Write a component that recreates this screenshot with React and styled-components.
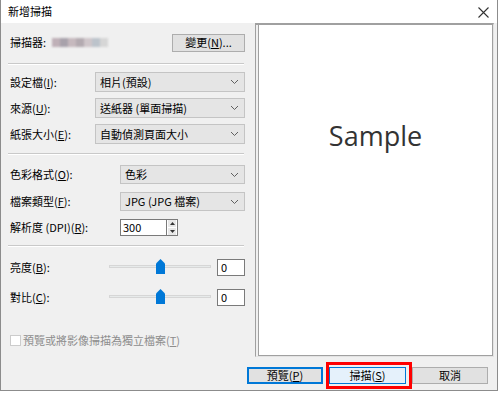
import React from 'react';
import styled, { createGlobalStyle } from 'styled-components';

const Global = createGlobalStyle`
  body {
    margin: 0;
    background: #fff;
    font-family: "Noto Sans CJK TC", "Noto Sans", sans-serif;
    font-size: 11px;
    color: #000;
  }
`;

function Mn({ children }) {
  return <u>{children}</u>;
}

function Chevron() {
  return (
    <svg width="9" height="6" viewBox="0 0 9 6">
      <path d="M1 1 L4.5 4.5 L8 1" fill="none" stroke="#606060" strokeWidth="1" />
    </svg>
  );
}

function Thumb() {
  return (
    <svg width="9" height="15" viewBox="0 0 9 15">
      <path d="M4.5 0 L9 4.5 V15 H0 V4.5 Z" fill="#0078d7" />
    </svg>
  );
}

function App() {
  return (
    <>
      <Global />
      <Window>
        <TitleBar>
          <span>新增掃描</span>
          <Close>
            <svg width="11" height="11" viewBox="0 0 11 11">
              <path d="M0.5 0.5 L10.5 10.5 M10.5 0.5 L0.5 10.5" stroke="#333" strokeWidth="1.1" />
            </svg>
          </Close>
        </TitleBar>
        <Body>
          <LeftPane>
            <ScannerRow>
              <span>掃描器:</span>
              <Blur>
                <i style={{ background: '#bfb0b7' }} />
                <i style={{ background: '#a8a2ab' }} />
                <i style={{ background: '#c6b9be' }} />
                <i style={{ background: '#b3aab0' }} />
                <i style={{ background: '#cfc6ca' }} />
                <i style={{ background: '#bcc3cb' }} />
                <i style={{ background: '#d6d6d6' }} />
              </Blur>
              <Button $w={73} $ml="auto">變更(<Mn>N</Mn>)...</Button>
            </ScannerRow>
            <Separator $mt={11} />
            <Group $gap={6} $mt={7}>
              <Row>
                <Label $w={85}>設定檔(<Mn>I</Mn>):</Label>
                <Combo $h={20}><span>相片(預設)</span><Chevron /></Combo>
              </Row>
              <Row>
                <Label $w={85}>來源(<Mn>U</Mn>):</Label>
                <Combo $h={20}><span>送紙器 (單面掃描)</span><Chevron /></Combo>
              </Row>
              <Row>
                <Label $w={85}>紙張大小(<Mn>E</Mn>):</Label>
                <Combo $h={20}><span>自動偵測頁面大小</span><Chevron /></Combo>
              </Row>
            </Group>
            <Separator $mt={9} />
            <Group $gap={8} $mt={10}>
              <Row>
                <Label $w={110}>色彩格式(<Mn>O</Mn>):</Label>
                <Combo $h={19}><span>色彩</span><Chevron /></Combo>
              </Row>
              <Row>
                <Label $w={110}>檔案類型(<Mn>F</Mn>):</Label>
                <Combo $h={19}><span>JPG (JPG 檔案)</span><Chevron /></Combo>
              </Row>
              <Row>
                <Label $w={110}>解析度 (DPI)(<Mn>R</Mn>):</Label>
                <Spin>
                  <SpinInput>300</SpinInput>
                  <SpinButtons>
                    <SpinBtn>
                      <svg width="5" height="3" viewBox="0 0 5 3"><path d="M0 3 L2.5 0 L5 3 Z" fill="#333" /></svg>
                    </SpinBtn>
                    <SpinBtn>
                      <svg width="5" height="3" viewBox="0 0 5 3"><path d="M0 0 L2.5 3 L5 0 Z" fill="#333" /></svg>
                    </SpinBtn>
                  </SpinButtons>
                </Spin>
              </Row>
            </Group>
            <Separator $mt={9} />
            <Group $gap={13} $mt={12}>
              <Row>
                <Label $w={99}>亮度(<Mn>B</Mn>):</Label>
                <Track>
                  <ThumbWrap><Thumb /></ThumbWrap>
                </Track>
                <ValueBox>0</ValueBox>
              </Row>
              <Row>
                <Label $w={99}>對比(<Mn>C</Mn>):</Label>
                <Track>
                  <ThumbWrap><Thumb /></ThumbWrap>
                </Track>
                <ValueBox>0</ValueBox>
              </Row>
            </Group>
            <CheckRow>
              <CheckBox />
              <span>預覽或將影像掃描為獨立檔案(<Mn>T</Mn>)</span>
            </CheckRow>
          </LeftPane>
          <Preview>
            <PreviewInner>Sample</PreviewInner>
          </Preview>
        </Body>
        <Footer>
          <Button $w={76} $h={17} $variant="focus">預覽(<Mn>P</Mn>)</Button>
          <Highlight>
            <Button $w={77} $h={17} $variant="hover">掃描(<Mn>S</Mn>)</Button>
          </Highlight>
          <Button $w={76} $h={17}>取消</Button>
        </Footer>
      </Window>
    </>
  );
}

const Window = styled.div`
  box-sizing: border-box;
  width: 498px;
  height: 391px;
  border: 1px solid #8c8c8c;
  border-top: none;
  background: #f0f0f0;
  display: flex;
  flex-direction: column;
`;

const TitleBar = styled.div`
  height: 23px;
  background: #fff;
  display: flex;
  align-items: center;
  padding: 0 8px 0 7px;
  font-size: 11px;
  line-height: 1;
  flex-shrink: 0;
`;

const Close = styled.div`
  margin-left: auto;
  display: flex;
  align-items: center;
  padding-top: 1px;
`;

const Body = styled.div`
  display: flex;
  height: 334px;
`;

const LeftPane = styled.div`
  width: 237px;
  margin-left: 7px;
  display: flex;
  flex-direction: column;
`;

const ScannerRow = styled.div`
  display: flex;
  align-items: center;
  margin-top: 10px;
  height: 19px;
  padding-left: 2px;
  line-height: 1;
`;

const Blur = styled.span`
  display: flex;
  margin-left: 6px;
  filter: blur(0.8px);
  i {
    width: 8px;
    height: 9px;
  }
`;

const Button = styled.div`
  box-sizing: border-box;
  width: ${p => p.$w}px;
  height: ${p => p.$h || 18}px;
  margin-left: ${p => p.$ml || 0};
  display: flex;
  align-items: center;
  justify-content: center;
  background: ${p => (p.$variant === 'hover' ? '#e5f1fb' : '#e1e1e1')};
  border: 1px solid ${p => (p.$variant === 'hover' || p.$variant === 'focus' ? '#0078d7' : '#adadad')};
  ${p => p.$variant === 'focus' && 'box-shadow: inset 0 0 0 1px #0078d7;'}
  font-size: 11px;
  line-height: 1;
  white-space: nowrap;
`;

const Separator = styled.div`
  height: 1px;
  background: #c9c9c9;
  border-bottom: 1px solid #fff;
  margin-top: ${p => p.$mt}px;
  margin-right: 1px;
`;

const Group = styled.div`
  display: flex;
  flex-direction: column;
  gap: ${p => p.$gap}px;
  margin-top: ${p => p.$mt}px;
`;

const Row = styled.div`
  display: flex;
  align-items: center;
`;

const Label = styled.div`
  width: ${p => p.$w}px;
  padding-left: 2px;
  flex-shrink: 0;
  font-size: 11px;
  line-height: 1;
  white-space: nowrap;
`;

const Combo = styled.div`
  box-sizing: border-box;
  flex: 1;
  height: ${p => p.$h}px;
  background: #e5e5e5;
  border: 1px solid #c4c4c4;
  display: flex;
  align-items: center;
  justify-content: space-between;
  padding: 0 5px 0 4px;
  font-size: 11px;
  line-height: 1;
`;

const Spin = styled.div`
  display: flex;
  height: 17px;
`;

const SpinInput = styled.div`
  box-sizing: border-box;
  width: 46px;
  height: 17px;
  background: #fff;
  border: 1px solid #7a7a7a;
  border-right: none;
  padding-left: 2px;
  display: flex;
  align-items: center;
  font-size: 11px;
  line-height: 1;
`;

const SpinButtons = styled.div`
  display: flex;
  flex-direction: column;
  width: 12px;
  border: 1px solid #7a7a7a;
  box-sizing: border-box;
  background: #fff;
`;

const SpinBtn = styled.div`
  flex: 1;
  display: flex;
  align-items: center;
  justify-content: center;
  background: #e8e8e8;
  margin: 0 1px;
  & + & {
    border-top: 1px solid #fff;
  }
`;

const Track = styled.div`
  position: relative;
  width: 102px;
  height: 3px;
  background: #e7eaea;
  border: 1px solid #d6d6d6;
  box-sizing: border-box;
  margin-top: -2px;
`;

const ThumbWrap = styled.div`
  position: absolute;
  left: 46px;
  top: -7px;
  display: flex;
`;

const ValueBox = styled.div`
  box-sizing: border-box;
  width: 28px;
  height: 17px;
  margin-left: 6px;
  background: #fff;
  border: 1px solid #7a7a7a;
  padding-left: 3px;
  display: flex;
  align-items: center;
  font-size: 11px;
  line-height: 1;
`;

const CheckRow = styled.div`
  display: flex;
  align-items: center;
  gap: 2px;
  margin-top: 29px;
  padding-left: 2px;
  color: #8d8d8d;
  font-size: 11px;
  line-height: 1;
`;

const CheckBox = styled.div`
  box-sizing: border-box;
  width: 11px;
  height: 11px;
  border: 1px solid #cccccc;
  background: #fff;
`;

const Preview = styled.div`
  box-sizing: border-box;
  width: 239px;
  margin-left: 10px;
  border-top: 2px solid #a0a0a0;
  border-left: 1px solid #a0a0a0;
  border-right: 1px solid #e3e3e3;
  border-bottom: 1px solid #e3e3e3;
  padding: 0 0 0 2px;
  display: flex;
`;

const PreviewInner = styled.div`
  flex: 1;
  background: #fff;
  border-left: 1px solid #a0a0a0;
  border-right: 1px solid #a0a0a0;
  border-bottom: 1px solid #a0a0a0;
  display: flex;
  justify-content: center;
  padding-top: 95px;
  font-family: "Open Sans", "Noto Sans", sans-serif;
  font-size: 27px;
  color: #333;
  line-height: 1.2;
`;

const Footer = styled.div`
  display: flex;
  align-items: center;
  margin-top: 10px;
  padding-left: 246px;
  gap: 6px;
`;

const Highlight = styled.div`
  position: relative;
  display: flex;
  &::after {
    content: '';
    position: absolute;
    left: -3px;
    top: -5px;
    right: -6px;
    bottom: -5px;
    border: 3px solid #ff0000;
    pointer-events: none;
  }
`;

export default App;
